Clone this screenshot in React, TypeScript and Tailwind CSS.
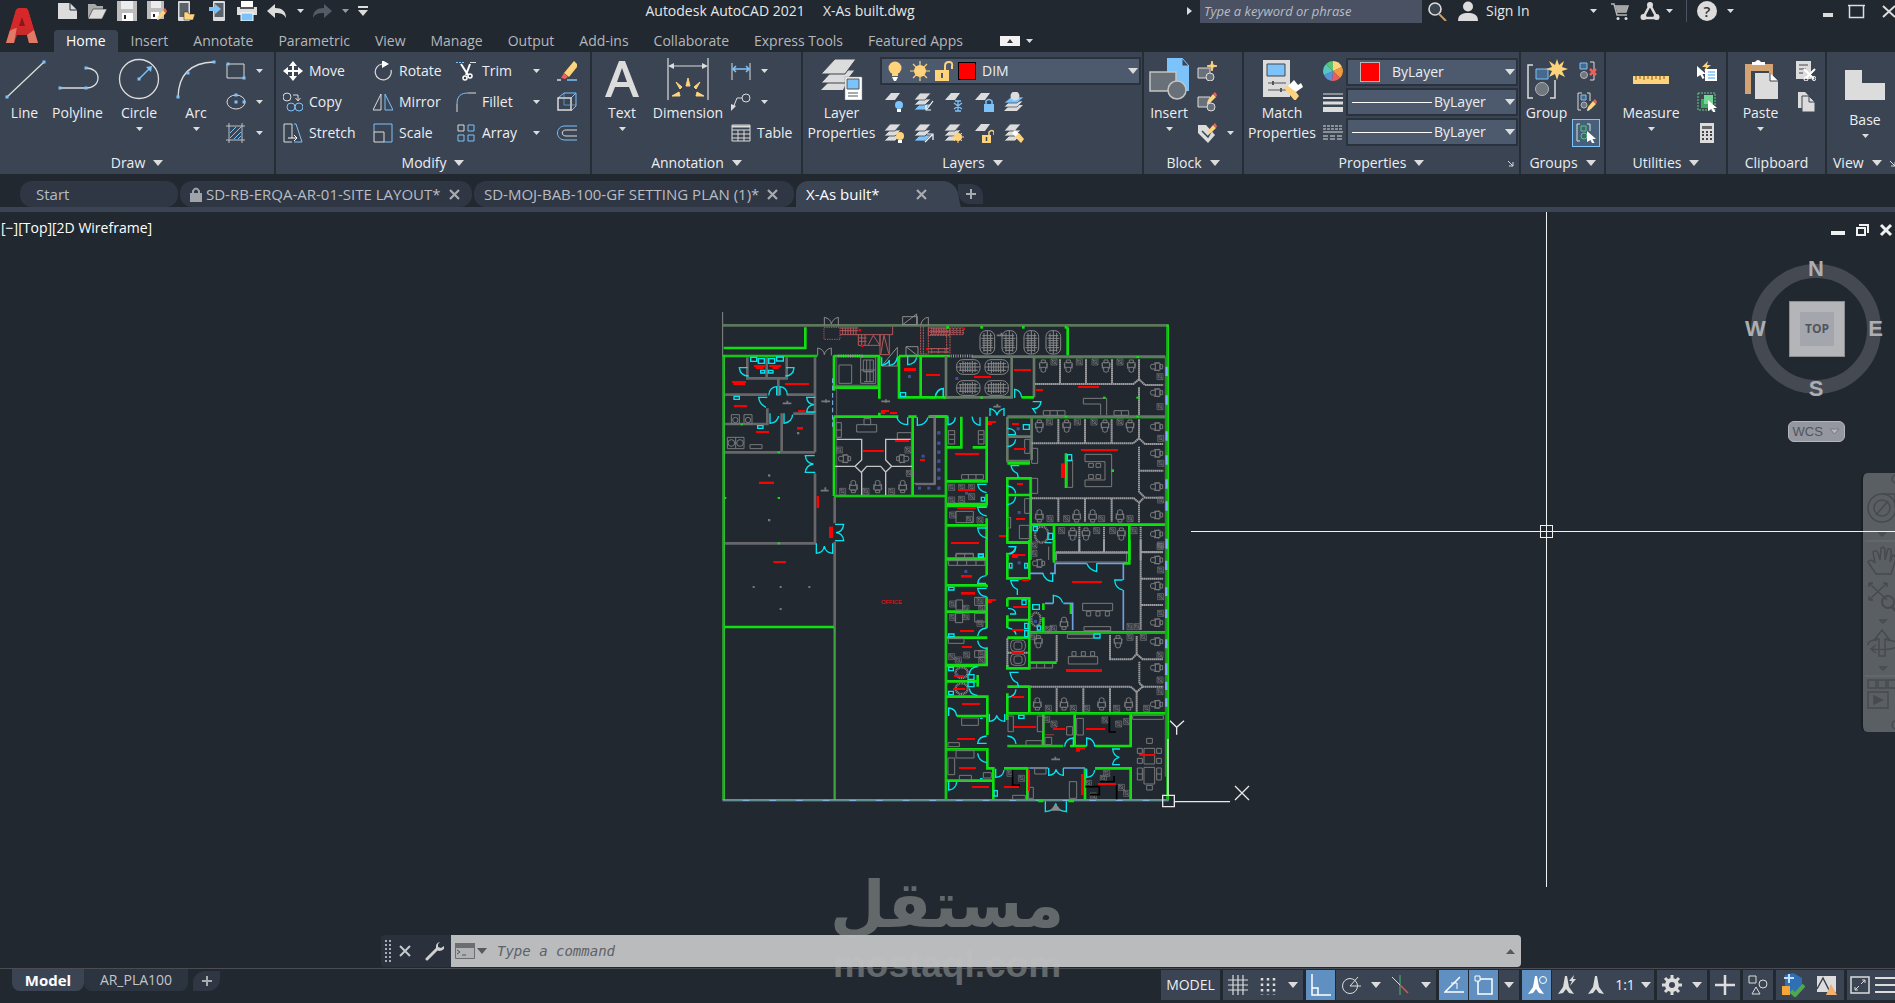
import React from "react";

const W = "#dcdcdc";
const B = "#7cc2fb";
const O = "#ffd27c";

type Kids = { children?: React.ReactNode };

function Ico({ s = 20, children }: Kids & { s?: number }) {
  return (
    <svg width={s} height={s} viewBox={`0 0 ${s} ${s}`} fill="none" className="shrink-0" aria-hidden="true">
      {children}
    </svg>
  );
}

function Caret({ big, color = W }: { big?: boolean; color?: string }) {
  return big ? (
    <svg width="10" height="6" viewBox="0 0 10 6" className="shrink-0" aria-hidden="true">
      <path d="M0 0H10L5 6Z" fill={color} />
    </svg>
  ) : (
    <svg width="7" height="4" viewBox="0 0 7 4" className="shrink-0" aria-hidden="true">
      <path d="M0 0H7L3.5 4Z" fill={color} />
    </svg>
  );
}

/* ---------- ribbon building blocks ---------- */

function Panel({ title, width, caret = true, launcher, children }: Kids & { title: string; width: string; caret?: boolean; launcher?: boolean }) {
  return (
    <section className={`flex shrink-0 flex-col border-r-2 border-[#262d37] pt-[3px] ${width}`}>
      <div className="flex h-[97px] items-start">{children}</div>
      <div className="flex h-[22px] items-center">
        <button className="flex flex-1 items-center justify-center gap-2 text-[14px] leading-5">
          {title}
          {caret && <Caret big />}
        </button>
        {launcher && (
          <button aria-label={`${title} settings`} className="-ml-3 w-3 shrink-0">
            <svg width="7" height="7" viewBox="0 0 7 7">
              <path d="M1 1L6 6M6 2V6H2" stroke={W} fill="none" />
            </svg>
          </button>
        )}
      </div>
    </section>
  );
}

function Big({ label, label2, width, caret, children }: Kids & { label: string; label2?: string; width: string; caret?: boolean }) {
  return (
    <button className={`flex shrink-0 flex-col items-center text-[14px] leading-5 ${width}`}>
      <span className="flex h-12 items-center justify-center">{children}</span>
      <span className="whitespace-nowrap">{label}</span>
      {label2 && <span className="whitespace-nowrap">{label2}</span>}
      {caret && (
        <span className="mt-1">
          <Caret />
        </span>
      )}
    </button>
  );
}

function Row({ label, text, caret, children }: Kids & { label: string; text?: boolean; caret?: boolean }) {
  return (
    <button aria-label={label} className="flex h-[31px] items-center gap-1.5 text-[14px] leading-5 whitespace-nowrap">
      {children}
      {text && <span>{label}</span>}
      {caret && (
        <span className="ml-auto pl-1">
          <Caret />
        </span>
      )}
    </button>
  );
}

function Field({ label, value, children, pad }: Kids & { label: string; value: string; pad: string }) {
  return (
    <div className="flex h-7 items-center border-2 border-[#2a323e] bg-[#4d5a6e]">
      {children}
      <select aria-label={label} className={`h-full min-w-0 flex-1 appearance-none bg-transparent text-[14px] leading-5 outline-none ${pad}`}>
        <option>{value}</option>
      </select>
      <Caret big />
      <span className="w-px" />
    </div>
  );
}

const dot = (x: number, y: number) => <rect key={`${x}-${y}`} x={x - 1.5} y={y - 1.5} width="3" height="3" fill={B} />;
const Sheet = ({ y = 0, c = W }: { y?: number; c?: string }) => <path d={`M1 ${y + 8}L7 ${y + 1}H16L11 ${y + 8}Z`} fill={c} />;
const Stack = ({ mid = W }: { mid?: string }) => (
  <g stroke="#3b4453" strokeWidth="0.8">
    <path d="M0 18L6 12H17L11 18Z" fill={mid} />
    <path d="M0 13L6 7H17L11 13Z" fill={W} />
    <path d="M0 8L6 1H17L11 8Z" fill={W} />
  </g>
);
const Pencil = () => (
  <g>
    <path d="M10 19L11 15L16 9L19 12L14 17Z" fill={O} />
    <path d="M16 9L18 7L20 10L19 12Z" fill="#f0605a" />
    <path d="M10 19L11 16L13 18Z" fill={W} />
  </g>
);
const Cursor = ({ x = 10, y = 7 }: { x?: number; y?: number }) => (
  <path transform={`translate(${x} ${y})`} d="M0 0L9 8H5.5L7.5 12L5.5 13L3.5 9L0 11Z" fill="#fff" />
);

/* ---------- title bar ---------- */

function QuickAccess() {
  return (
    <div className="flex items-center">
      <button aria-label="New" className="w-[30px]"><Ico><path d="M1 2H13L20 9V18H1Z" fill={W} /><path d="M13 2V9H20" stroke="#222830" /></Ico></button>
      <button aria-label="Open" className="w-[30px]"><Ico><path d="M1 18V3H8L10 5H16V8" fill="#a9a9a9" /><path d="M1 18L6 8H20L15 18Z" fill={W} stroke="#222830" strokeWidth=".6" /></Ico></button>
      <button aria-label="Save" className="w-[30px]"><Ico><path d="M0 0H20V20H0Z" fill="#bdbdbd" /><path d="M4 0H16V8H4Z" fill="#ececec" /><path d="M5 12H16V20H5Z" fill="#fff" /><path d="M7 14H9V18H7Z" fill="#222" /></Ico></button>
      <button aria-label="Save As" className="w-[30px]"><Ico><path d="M0 0H17V18H0Z" fill="#bdbdbd" /><path d="M4 0H14V7H4Z" fill="#ececec" /><path d="M4 11H12V18H4Z" fill="#fff" /><path d="M6 13H8V16H6Z" fill="#222" /><Pencil /></Ico></button>
      <button aria-label="Open from Web and Mobile" className="w-[30px]"><Ico><rect x="1" y="0" width="12" height="20" rx="1" fill={W} /><rect x="2.500" y="2" width="9" height="14" fill="#5c626b" /><path d="M7 19V11H11L12 13H18L16 19Z" fill={O} stroke="#222830" strokeWidth=".5" /></Ico></button>
      <button aria-label="Save to Web and Mobile" className="w-[30px]"><Ico><rect x="6" y="0" width="12" height="20" rx="1" fill={W} /><rect x="7.500" y="2" width="9" height="14" fill="#5c626b" /><path d="M2 6H8V3L14 8L8 13V10H2Z" fill={B} /></Ico></button>
      <button aria-label="Plot" className="w-[30px]"><Ico><path d="M4 0H16V6H4Z" fill="#fff" /><path d="M0 6H20V14H0Z" fill={W} /><path d="M3 6H17V8H3Z" fill="#555" /><path d="M4 12H16V20H4Z" fill={B} stroke="#fff" /></Ico></button>
      <button aria-label="Undo" className="w-[30px]"><Ico><path d="M0 10L8 3V7C15 7 19 10 19 17C17 13 14 12 8 12V17Z" fill={W} /></Ico></button>
      <button aria-label="Undo list" className="w-[15px]"><Caret /></button>
      <button aria-label="Redo" className="w-[30px]"><Ico><path d="M20 10L12 3V7C5 7 1 10 1 17C3 13 6 12 12 12V17Z" fill="#555b64" /></Ico></button>
      <button aria-label="Redo list" className="w-[15px]"><Caret color="#9a9a9a" /></button>
      <button aria-label="Customize" className="w-[20px]"><svg width="12" height="10" viewBox="0 0 12 10"><path d="M1 0H11V2H1ZM1 4H11L6 10Z" fill={W} /></svg></button>
    </div>
  );
}

function TitleBar() {
  return (
    <div className="flex h-6 items-center pb-0.5 text-[14px] leading-5 text-[#e6e6e6]">
      <div className="w-[3px]" />
      <QuickAccess />
      <h1 className="flex-1 pr-1 text-center whitespace-pre">Autodesk AutoCAD 2021{"     "}X-As built.dwg</h1>
      <div className="flex h-full items-center">
        <svg width="5" height="8" viewBox="0 0 5 8" className="mr-2"><path d="M0 0V8L5 4Z" fill={W} /></svg>
        <input aria-label="Search" placeholder="Type a keyword or phrase" className="h-6 w-[222px] bg-[#495163] px-1 text-[13px] italic outline-none placeholder:text-[#b9bdc4]" />
        <button aria-label="Find" className="w-[34px] pl-1.5"><Ico><circle cx="7" cy="8" r="6" stroke={W} strokeWidth="1.600" fill="#3c444f" /><path d="M11 13L18 20" stroke="#c79d6a" strokeWidth="2" /></Ico></button>
        <button className="flex w-[141px] items-center gap-2 pl-0.5"><Ico><circle cx="10" cy="5.500" r="5" fill={W} /><path d="M0 20C0 13 5 12 10 12S20 13 20 20Z" fill={W} /></Ico>Sign In<span className="ml-auto"><Caret /></span></button>
        <button aria-label="App Store" className="w-[43px] pl-3.5"><Ico><path d="M0 3H3L6 14H16M4 5H17L15 11H6" stroke="#b5b5b5" strokeWidth="1.500" /><path d="M4 5H17L15 11H6Z" fill="#a5a5a5" /><circle cx="7" cy="17.500" r="1.500" fill={W} /><circle cx="15" cy="17.500" r="1.500" fill={W} /></Ico></button>
        <button aria-label="Connect" className="flex w-[46px] items-center gap-1.5"><Ico><path d="M10 4L3 17H17Z" stroke={W} strokeWidth="2.500" /><circle cx="10" cy="4" r="3" fill={W} /><circle cx="3.500" cy="16" r="3" fill={W} /><circle cx="16.500" cy="16" r="3" fill={W} /></Ico><Caret /></button>
        <span className="h-full w-px bg-[#4a5363]" />
        <button aria-label="Help" className="flex w-[131px] items-center gap-2.5 pl-2.5">
          <span className="grid size-5 place-items-center rounded-full bg-[#dcdcdc] text-[15px] leading-5 font-semibold text-[#333]">?</span><Caret />
        </button>
        <button aria-label="Minimize" className="w-[30px]"><svg width="20" height="16" viewBox="0 0 20 16"><path d="M5 10H15V14H5Z" fill={W} /></svg></button>
        <button aria-label="Maximize" className="w-[30px]"><Ico s={17}><path d="M1.500 2V14.500H15.500V2M0 2.500H17" stroke={W} strokeWidth="1.500" /></Ico></button>
        <button aria-label="Close" className="w-[17px] overflow-hidden pl-1"><Ico s={14}><path d="M1 2L13 13M13 2L1 13" stroke={W} strokeWidth="2" /></Ico></button>
      </div>
    </div>
  );
}

const MENUS = ["Home", "Insert", "Annotate", "Parametric", "View", "Manage", "Output", "Add-ins", "Collaborate", "Express Tools", "Featured Apps"];

function Header() {
  return (
    <header className="flex h-[52px] shrink-0">
      <button aria-label="Application menu" className="w-[54px] shrink-0">
        <svg width="44" height="44" viewBox="0 0 44 44">
          <path d="M6 39L16 6Q17 4 19 4H25Q27 4 28 6L38 39H29L27 31H17L14 39Z" fill="#c92a2c" />
          <path d="M6 39L10 26L17 23L14 39ZM38 39L34 26L27 31L29 39Z" fill="#e07a66" />
          <path d="M10 27Q20 20 34 26L28 6Q27 4 25 4H19L16 6Z" fill="#d6282b" />
          <path d="M22 13L19 22H25Z" fill="#8a1618" />
        </svg>
      </button>
      <div className="flex min-w-0 flex-1 flex-col">
        <TitleBar />
        <nav className="mt-1.5 flex h-[22px] items-center gap-px text-[14px] leading-5 text-[#b4b7bc]">
          {MENUS.map((m, i) => (
            <button key={m} className={i === 0 ? "h-full rounded-t-sm bg-[#3b4453] px-3 text-white" : "px-3 whitespace-nowrap"}>{m}</button>
          ))}
          <button aria-label="Ribbon display" className="ml-6 flex items-center gap-1.5">
            <span className="grid h-2.5 w-5 place-items-center bg-[#f2f2f2]"><svg width="6" height="4" viewBox="0 0 6 4"><path d="M0 4H6L3 0Z" fill="#333" /></svg></span>
            <Caret />
          </button>
        </nav>
      </div>
    </header>
  );
}

/* ---------- ribbon ---------- */

function Ribbon() {
  return (
    <div className="flex h-[122px] shrink-0 overflow-hidden bg-[#3b4453] text-[#eceef0]">
      <Panel title="Draw" width="w-[276px]">
        <Big label="Line" width="w-[49px]"><Ico s={42}><path d="M3 39L40 4" stroke={W} strokeWidth="1.300" />{dot(3, 39)}{dot(40, 4)}</Ico></Big>
        <Big label="Polyline" width="w-[57px]"><Ico s={42}><path d="M3 30H29C36 30 41 26 41 20S36 10 29 10" stroke={W} strokeWidth="1.300" />{dot(3, 30)}{dot(29, 30)}{dot(29, 10)}</Ico></Big>
        <Big label="Circle" width="w-[66px]" caret><Ico s={42}><circle cx="21" cy="21" r="19.500" stroke={W} strokeWidth="1.300" /><path d="M21 21L32 10" stroke={B} strokeWidth="1.500" /><path d="M28 9L34 8L33 14Z" fill={B} />{dot(21, 21)}</Ico></Big>
        <Big label="Arc" width="w-[48px]" caret><Ico s={42}><path d="M3 39Q4 5 39 4" stroke={W} strokeWidth="1.300" />{dot(3, 39)}{dot(13, 15)}{dot(39, 4)}</Ico></Big>
        <div className="ml-1.5 flex w-9 flex-col">
          <Row label="Rectangle" caret><Ico><path d="M1 3H18V17H1Z" stroke={W} />{dot(2, 3)}{dot(18, 17)}</Ico></Row>
          <Row label="Ellipse" caret><Ico><ellipse cx="10" cy="10" rx="9" ry="7" stroke={W} />{dot(10, 10)}{dot(10, 3)}{dot(18, 10)}</Ico></Row>
          <Row label="Hatch" caret><Ico><path d="M0 3H19M0 17H19M3 0V20M16 0V20" stroke={W} strokeWidth=".8" /><path d="M4 10L10 4M4 15L15 4M8 16L15 9M12 16L15 13" stroke={B} /></Ico></Row>
        </div>
      </Panel>

      <Panel title="Modify" width="w-[316px]">
        <div className="flex w-[91px] flex-col pl-[7px]">
          <Row label="Move" text><Ico><path d="M10 2V18M2 10H18" stroke="#fff" strokeWidth="2" /><path d="M10 0L14 5H6ZM10 20L6 15H14ZM0 10L5 6V14ZM20 10L15 14V6Z" fill="#fff" /></Ico></Row>
          <Row label="Copy" text><Ico><circle cx="4" cy="5" r="4" stroke={W} /><path d="M10 3H15V8M12.500 6L15 9L17.500 6" stroke={W} /><circle cx="8" cy="15" r="4" stroke={B} /><circle cx="16" cy="15" r="4" stroke={B} /></Ico></Row>
          <Row label="Stretch" text><Ico><path d="M9 15V1H1V19H9" stroke={W} /><path d="M11 1H13L19 19H11" stroke={B} /><path d="M5 15H13M11 12L14 15L11 18" stroke="#fff" /></Ico></Row>
        </div>
        <div className="flex w-[88px] flex-col pl-[6px]">
          <Row label="Rotate" text><Ico><path d="M9 3A8 8 0 1 0 18 9" stroke={W} strokeWidth="1.200" /><path d="M9 -1L16 3L9 7Z" fill="#fff" /></Ico></Row>
          <Row label="Mirror" text><Ico><path d="M8 2V18H0Z" stroke={W} /><path d="M12 2V18H20Z" stroke={B} /></Ico></Row>
          <Row label="Scale" text><Ico><path d="M1 9V1H19V19H11" stroke={B} /><path d="M1 9H11V19H1Z" stroke={W} /></Ico></Row>
        </div>
        <div className="ml-px flex w-[84px] flex-col">
          <Row label="Trim" text caret><Ico><path d="M0 1.500H8" stroke={B} strokeDasharray="2 1" /><path d="M14 1.500H20" stroke={W} /><path d="M5 3L12 14M14 3L10 14" stroke="#fff" strokeWidth="2" /><circle cx="9" cy="17" r="2" stroke="#fff" strokeWidth="1.500" /><circle cx="14" cy="15" r="2" stroke="#fff" strokeWidth="1.500" /></Ico></Row>
          <Row label="Fillet" text caret><Ico><path d="M1 20V12" stroke={W} /><path d="M1 12C1 4 5 1 12 1" stroke={B} /><path d="M12 1H20" stroke={W} /></Ico></Row>
          <Row label="Array" text caret><Ico><path d="M2 2H8V8H2Z" stroke={W} /><path d="M12 2H18V8H12ZM2 12H8V18H2ZM12 12H18V18H12Z" stroke={B} /></Ico></Row>
        </div>
        <div className="ml-[17px] flex flex-col">
          <Row label="Erase"><Ico><path d="M0 19H4" stroke={W} strokeWidth="1.500" /><path d="M10 19H20" stroke={B} strokeWidth="1.500" /><path d="M7 12L17 0L20 3V6L12 16Z" fill={O} /><path d="M4 17L7 12L11 16L8 18Z" fill="#f0605a" /></Ico></Row>
          <Row label="Explode"><Ico><path d="M1 6L7 1H19V14L14 19M14 6L19 1" stroke={B} /><path d="M1 6H14V18H1Z" stroke={W} strokeWidth="1.500" /><path d="M7 1V13H19" stroke={B} strokeWidth=".6" /></Ico></Row>
          <Row label="Offset"><Ico><path d="M20 3H8C-2 3-2 17 8 17H20" stroke={B} /><path d="M20 7H9C4 7 4 13 9 13H20" stroke={W} /></Ico></Row>
        </div>
      </Panel>

      <Panel title="Annotation" width="w-[211px]">
        <Big label="Text" width="w-[60px]" caret><Ico s={40}><path d="M3 38L17 2H23L37 38H31L27 28H13L9 38ZM15 23H25L20 9Z" fill={W} fillRule="evenodd" /></Ico></Big>
        <Big label="Dimension" width="w-[72px]"><Ico s={42}><path d="M1 0V42M41 0V42M3 8H39" stroke={W} strokeWidth="1.200" /><path d="M1 8L7 5V11ZM41 8L35 5V11Z" fill={W} /><path d="M21 20L23 28H19ZM9 24L15 29L13 31ZM33 24L27 29L29 31ZM5 38L12 34L13 38ZM37 38L30 34L29 38Z" fill={O} stroke={O} /></Ico></Big>
        <div className="ml-[7px] flex flex-col">
          <div className="flex w-9 flex-col">
            <Row label="Linear" caret><Ico><path d="M1 2V19M19 2V19" stroke={W} /><path d="M2 8H18M5 5L2 8L5 11M15 5L18 8L15 11" stroke={B} strokeWidth="1.500" /></Ico></Row>
            <Row label="Leader" caret><Ico><circle cx="15" cy="6" r="4" stroke={W} /><path d="M11 6H6L2 16" stroke={W} /><path d="M0 19V12L5 14Z" fill={W} /></Ico></Row>
          </div>
          <Row label="Table" text><Ico><path d="M1 2H19V18H1ZM1 7H19M1 11H19M1 15H19M7 7V18M13 7V18" stroke={W} /><path d="M1 3.500H19" stroke={W} strokeWidth="2" /></Ico></Row>
        </div>
      </Panel>

      <Panel title="Layers" width="w-[341px]">
        <Big label="Layer" label2="Properties" width="w-[77px]"><Ico s={42}><path d="M0 32L12 20H28L22 32Z" fill={W} /><path d="M0 25L12 12H34L24 25Z" fill={W} stroke="#3b4453" /><path d="M0 16L14 1H35L24 16Z" fill={W} stroke="#3b4453" /><path d="M24 19H41V42H24Z" fill="#fff" stroke="#8a8f97" strokeWidth=".5" /><path d="M26 21H38V31H26Z" fill={B} stroke="#555" /><path d="M27 35H37M27 38H37" stroke="#555" /></Ico></Big>
        <div className="flex min-w-0 flex-1 flex-col pr-px">
          <div className="h-[31px] pt-0.5">
            <Field label="Layer" value="DIM" pad="pl-1.5">
              <div className="flex items-center gap-1 pl-1">
                <Ico><circle cx="9" cy="7" r="6.500" fill={O} /><path d="M6 13H12V15H6Z" fill={O} /><path d="M6 16H12L10 20H8Z" fill="#fff" /></Ico>
                <Ico><circle cx="10" cy="10" r="6" fill={O} /><path d="M10 0V20M0 10H20M3 3L17 17M17 3L3 17" stroke={O} strokeWidth="1.200" /></Ico>
                <Ico><path d="M1 9H15V20H1Z" fill={O} /><path d="M11 9V5Q11 1 15 1T18 5V8" stroke={O} strokeWidth="2" /><path d="M8 12V17" stroke="#4d5a6e" strokeWidth="2" /></Ico>
                <span className="size-[18px] border border-black bg-[#ff0000]" />
              </div>
            </Field>
          </div>
          <div className="flex h-[31px] items-center gap-2.5 pl-1">
            <button aria-label="Layer off"><Ico><Sheet /><circle cx="15" cy="13" r="4" fill={B} /><path d="M13 17H17V20H13Z" fill="#fff" /></Ico></button>
            <button aria-label="Layer isolate"><Ico><Stack mid={B} /><path d="M19 9L13 17M12 13V18H17" stroke="#fff" strokeWidth="1.200" /></Ico></button>
            <button aria-label="Layer freeze"><Ico><Sheet /><path d="M14 9V19M10 11L18 17M18 11L10 17M11 9L17 9M11 19H17" stroke={B} strokeWidth="1.300" /></Ico></button>
            <button aria-label="Layer lock"><Ico><Sheet /><path d="M10 12H20V20H10Z" fill={B} /><path d="M12 12V9Q15 6 18 9V12" stroke={B} strokeWidth="1.500" /></Ico></button>
            <button aria-label="Make current"><Ico><path d="M0 19L6 13H19L13 19Z" fill={W} /><path d="M0 15L6 9H19L13 15Z" fill={W} stroke="#3b4453" strokeWidth=".7" /><path d="M0 11L7 5H20L13 11Z" fill={B} stroke="#3b4453" strokeWidth=".7" /><circle cx="11" cy="4" r="4.500" fill={W} /></Ico></button>
          </div>
          <div className="flex h-[31px] items-center gap-2.5 pl-1">
            <button aria-label="Turn all layers on"><Ico><Stack /><circle cx="16" cy="13" r="4" fill={O} /><path d="M14 17H18V20H14Z" fill="#fff" /></Ico></button>
            <button aria-label="Unisolate"><Ico><Stack mid={B} /><path d="M11 19L18 12M13 11H19V17" stroke="#fff" strokeWidth="1.200" /></Ico></button>
            <button aria-label="Thaw all layers"><Ico><Stack /><circle cx="14" cy="14" r="4" fill={O} /><path d="M14 8V20M8 14H20M10 10L18 18M18 10L10 18" stroke={O} /></Ico></button>
            <button aria-label="Unlock layer"><Ico><Sheet /><path d="M8 12H17V20H8Z" fill={O} /><path d="M15 12V9Q18 6 20 9V12" stroke={O} strokeWidth="1.500" /><path d="M12.500 14V18" stroke="#3b4453" strokeWidth="1.500" /></Ico></button>
            <button aria-label="Match layer"><Ico><Stack /><path d="M8 10L11 7L15 11L12 14Z" fill="#fff" /><path d="M11 14L15 10L20 16L17 20Z" fill={O} /></Ico></button>
          </div>
        </div>
      </Panel>

      <Panel title="Block" width="w-[100px]">
        <Big label="Insert" width="w-[50px]" caret><Ico s={42}><path d="M19 0H34L41 8V33H19Z" fill={B} /><path d="M34 0V8H41Z" fill="#3b4453" stroke={B} /><path d="M2 14H28V33H2Z" fill="#6a7078" stroke="#c4c4c4" strokeWidth="1.500" /><circle cx="29" cy="32" r="9" fill="#6a7078" stroke="#c4c4c4" strokeWidth="1.500" /></Ico></Big>
        <div className="ml-[3px] flex w-9 flex-col">
          <Row label="Create block"><Ico><path d="M1 7H13V17H1Z" fill="#6a7078" stroke={W} /><circle cx="13" cy="16" r="4" fill="#6a7078" stroke={W} /><path d="M15 0L16 4L20 5L16 6L15 10L14 6L10 5L14 4Z" fill={O} stroke={O} /></Ico></Row>
          <Row label="Edit block"><Ico><path d="M1 5H13V15H1Z" fill="#6a7078" stroke={W} /><circle cx="14" cy="15" r="4" fill="#6a7078" stroke={W} /><g transform="translate(0 -7)"><Pencil /></g></Ico></Row>
          <Row label="Edit attributes" caret><Ico><path d="M1 2H9L18 12L11 20L1 10Z" fill={W} /><path d="M5 8L11 14L15 7" stroke="#3b4453" strokeWidth="1.500" /><g transform="translate(0 -7)"><Pencil /></g></Ico></Row>
        </div>
      </Panel>

      <Panel title="Properties" width="w-[277px]" launcher>
        <Big label="Match" label2="Properties" width="w-[76px]"><Ico s={42}><path d="M2 2H29V39H2Z" fill={W} /><path d="M6 6H24V18H6Z" fill={B} stroke="#444" /><path d="M7 25H25M7 32H25" stroke="#555" /><path d="M12 23V27M20 30V34" stroke="#555" strokeWidth="2" /><path d="M23 30L29 26L38 38L34 43Z" fill={O} /><path d="M27 28L33 22L37 27L40 25L42 29L35 34Z" fill="#fff" /></Ico></Big>
        <div className="ml-[3px] flex flex-col">
          <Row label="Object color"><Ico><path d="M10 10V0A10 10 0 0 1 19 6Z" fill="#ffd27c" /><path d="M10 10L19 6A10 10 0 0 1 17 17Z" fill="#f49a3d" /><path d="M10 10L17 17A10 10 0 0 1 9 20Z" fill="#f05a5a" /><path d="M10 10L9 20A10 10 0 0 1 1 14Z" fill="#5b8fd6" /><path d="M10 10L1 14A10 10 0 0 1 3 3Z" fill="#54c8c0" /><path d="M10 10L3 3A10 10 0 0 1 10 0Z" fill="#58c470" /></Ico></Row>
          <Row label="Lineweight"><Ico><path d="M0 2H20" stroke={W} strokeWidth="1" /><path d="M0 6H20" stroke={W} strokeWidth="2" /><path d="M0 11H20" stroke={W} strokeWidth="3" /><path d="M0 17.500H20" stroke={W} strokeWidth="5" /></Ico></Row>
          <Row label="Linetype"><Ico><path d="M0 3H20M0 6H20" stroke={W} strokeDasharray="3 1" /><path d="M0 9H20" stroke={W} /><path d="M0 13H20M0 16H20" stroke={W} strokeDasharray="5 2" /></Ico></Row>
        </div>
        <div className="ml-[3px] flex flex-1 flex-col gap-0.5 pt-[3px] pr-px">
          <Field label="Object color" value="ByLayer" pad="pl-3"><span className="ml-3 size-5 border border-[#b9b9b9] bg-[#ff0000]" /></Field>
          <Field label="Lineweight" value="ByLayer" pad="pl-0.5"><span className="ml-1 h-px w-20 bg-white" /></Field>
          <Field label="Linetype" value="ByLayer" pad="pl-0.5"><span className="ml-1 h-px w-20 bg-white" /></Field>
        </div>
      </Panel>

      <Panel title="Groups" width="w-[85px]">
        <Big label="Group" width="w-[51px]"><Ico s={42}><path d="M7 7H2V40H7M24 40H29V22" stroke={W} strokeWidth="1.500" /><path d="M10 11H22V21H10Z" fill="#46698c" stroke={B} /><circle cx="16" cy="31" r="6.500" fill="#70767e" stroke="#b5b5b5" /><path d="M31 1L33 7L38 3L36 9L42 11L36 13L39 19L33 16L31 22L29 16L23 19L26 13L20 11L26 9L23 3L29 7Z" fill={O} /></Ico></Big>
        <div className="flex flex-col items-center">
          <div className="pl-0.5"><Row label="Ungroup"><Ico><path d="M3 2H10V8H3Z" fill="#46698c" stroke={B} /><circle cx="7" cy="14" r="3.500" fill="#70767e" stroke="#b5b5b5" /><path d="M13 1H17V19H13" stroke={W} /><path d="M13 8L19 14M19 8L13 14" stroke="#f0605a" strokeWidth="2.500" /></Ico></Row></div>
          <div className="pl-0.5"><Row label="Edit group"><Ico><path d="M5 1H1V18H4M10 1H13V9" stroke={W} /><path d="M4 3H9V8H4Z" fill="#46698c" stroke={B} /><circle cx="7" cy="13" r="3" fill="#70767e" stroke="#b5b5b5" /><Pencil /></Ico></Row></div>
          <button aria-label="Group selection" className="mt-0.5 grid size-7 place-items-center border border-[#7cc2fb] bg-[#46607c]"><Ico><path d="M4 1H1V18H4M11 1H14V8" stroke={W} /><path d="M5 3H10V8H5Z" stroke="#4fd06a" /><circle cx="8" cy="13" r="3" stroke="#4fd06a" /><Cursor x={11} y={8} /></Ico></button>
        </div>
      </Panel>

      <Panel title="Utilities" width="w-[122px]">
        <Big label="Measure" width="w-[90px]" caret><Ico s={36}><path d="M0 15H36V23H0Z" fill={O} /><path d="M3 15V19M7 15V18M11 15V19M15 15V18M19 15V19M23 15V18M27 15V19M31 15V18" stroke="#7a5a20" /></Ico></Big>
        <div className="ml-px flex flex-col">
          <Row label="Quick select"><Ico><path d="M11 0L5 6H9L7 10L14 4H10Z" fill={O} /><path d="M8 8H20V20H8Z" fill="#fff" /><path d="M11 11H18M11 14H18M11 17H18" stroke={B} strokeWidth="1.500" /><Cursor x={0} y={5} /></Ico></Row>
          <Row label="Select all"><Ico><path d="M1 1H18V18H1Z" stroke="#5fd080" strokeDasharray="2 1" /><path d="M4 7H13V16H4Z" fill="#3fa860" /><path d="M7 3H16V12H7Z" fill="#74d795" /><Cursor x={11} y={8} /></Ico></Row>
          <Row label="Quick calculator"><Ico><path d="M3 0H17V20H3Z" fill={W} /><path d="M5 3H15V6H5Z" fill="#666" /><path d="M5 9H7M9 9H11M13 9H15M5 12H7M9 12H11M13 12H15M5 16H7M9 16H11M13 16H15" stroke="#444" strokeWidth="2" /></Ico></Row>
        </div>
      </Panel>

      <Panel title="Clipboard" width="w-[99px]" caret={false}>
        <Big label="Paste" width="w-[65px]" caret><Ico s={40}><path d="M4 5H32V35H4Z" fill="#d4a373" /><path d="M8 10H28V35H8Z" fill="#3b4453" /><path d="M4 5H32V12H10V35H4Z" fill="#d4a373" /><path d="M11 6V3H14Q17-1 20 3H24V6Z" fill="#fff" /><path d="M14 14H29L37 22V40H14Z" fill={W} /><path d="M29 14V22H37" fill="#fff" stroke="#3b4453" /></Ico></Big>
        <div className="ml-[3px] flex flex-col">
          <Row label="Cut"><Ico><path d="M0 0H15V18H0Z" fill={W} /><path d="M3 4H12M3 8H10M3 12H7" stroke="#444" /><path d="M8 8L18 18M19 8L10 17" stroke="#fff" strokeWidth="2" /><circle cx="18" cy="17.500" r="2" stroke="#fff" /><circle cx="10" cy="18" r="2" stroke="#fff" /></Ico></Row>
          <Row label="Copy to clipboard"><Ico><path d="M2 0H9L14 5V16H2Z" fill={W} /><path d="M6 4H13L19 10V20H6Z" fill={W} stroke="#3b4453" /><path d="M13 4V10H19" stroke="#3b4453" /></Ico></Row>
        </div>
      </Panel>

      <section className="flex min-w-0 flex-1 flex-col overflow-hidden pt-2.5">
        <div className="flex h-[90px] items-start justify-center pl-2"><Big label="Base" width="w-[50px]" caret><Ico s={40}><path d="M0 4H17V17H40V34H0Z" fill={W} /></Ico></Big></div>
        <div className="flex h-[22px] items-center justify-between pl-1.5 text-[14px] leading-5">
          <button className="flex items-center gap-2">View<Caret big /></button>
          <button aria-label="View settings" className="w-1.5 overflow-hidden"><svg width="7" height="7" viewBox="0 0 7 7"><path d="M1 1L6 6M6 2V6H2" stroke={W} fill="none" /></svg></button>
        </div>
      </section>
    </div>
  );
}

/* ---------- document tabs ---------- */

function DocTabs() {
  const base = "relative flex h-[26px] shrink-0 items-center rounded-xl bg-[#303744] whitespace-nowrap";
  return (
    <div className="flex h-[38px] shrink-0 items-start border-b-5 border-[#3b4453] bg-[#222830] pt-[7px] pl-5 text-[15px] leading-5 text-[#b9bcc2]">
      <button className={`${base} mr-0.5 w-[158px] pl-4`}>Start</button>
      <div className={`${base} mr-0.5 w-[292px] pl-2.5`}>
        <svg width="12" height="15" viewBox="0 0 12 15" className="mr-1"><path d="M0 6H12V15H0Z" fill="#a0a4aa" /><path d="M3 7V4Q6-1 9 4V7" stroke="#a0a4aa" strokeWidth="2" fill="none" /></svg>
        <button>SD-RB-ERQA-AR-01-SITE LAYOUT*</button>
        <CloseX />
      </div>
      <div className={`${base} mr-0.5 w-[320px] pl-2.5`}>
        <button>SD-MOJ-BAB-100-GF SETTING PLAN (1)*</button>
        <CloseX />
      </div>
      <div className="flex h-[26px] w-[150px] shrink-0 items-center rounded-t-xl bg-[#3b4453] pl-2.5 text-white after:-mr-3 after:ml-auto after:h-full after:w-6 after:skew-x-12 after:rounded-tr-xl after:bg-[#3b4453]">
        <button className="relative z-10 whitespace-nowrap">X-As built*</button>
        <span className="relative z-10 pl-7"><CloseX /></span>
      </div>
      <button aria-label="New drawing" className="mt-[3px] ml-3 grid h-5 w-[25px] place-items-center rounded-tr-xl rounded-bl-xl bg-[#303744]">
        <svg width="10" height="10" viewBox="0 0 10 10"><path d="M5 0V10M0 5H10" stroke="#a8abb0" strokeWidth="2" /></svg>
      </button>
    </div>
  );
}

function CloseX() {
  return (
    <button aria-label="Close drawing" className="ml-2">
      <svg width="11" height="11" viewBox="0 0 11 11"><path d="M1 1L10 10M10 1L1 10" stroke="#a8abb0" strokeWidth="2.200" /></svg>
    </button>
  );
}

/* ---------- floor plan ---------- */

const FURN = "#7a7a7b";
const GREEN = "#0fe00f";

function Chair({ x, y, r = 0 }: { x: number; y: number; r?: number }) {
  return (
    <g transform={`translate(${x} ${y}) rotate(${r})`}>
      <path d="M-11-10H11V4H-11ZM-7 4V16Q0 22 7 16V4M-14-6H-11V8M14-6H11V8M-6-18H6V-10H-6Z" />
    </g>
  );
}

function Desk({ x, y }: { x: number; y: number }) {
  return <path d={`M${x - 9} ${y - 9}h18v18h-18ZM${x - 5} ${y - 5}h9v9h-9ZM${x - 9} ${y - 9}l18 18`} strokeWidth="2" />;
}

function Car({ x, y, r = 0 }: { x: number; y: number; r?: number }) {
  return (
    <g transform={`translate(${x} ${y}) rotate(${r})`} stroke="#8a8a8a">
      <rect x="-22" y="-35" width="44" height="70" rx="18" />
      <path d="M-15-20H15M-18-12H18M-15-5H15M-15 2H15M-15 9H15M-18 16H18M-12 24H12M-10-28V28M0-34V34M10-28V28" />
    </g>
  );
}

type R = [number, number, number, number];
const bars = (list: R[], fill: string) => list.map(([x, y, w, h], i) => <rect key={i} x={x} y={y} width={w} height={h} fill={fill} />);
const chairs = (list: number[][]) => list.map(([x, y, r]) => <Chair key={`${x},${y}`} x={x} y={y} r={r} />);
const desks = (list: number[][]) => list.map(([x, y]) => <Desk key={`${x},${y}`} x={x} y={y} />);

function WestWing() {
  return (
    <g transform="scale(0.33333)" fill="none">
      <path d="M38 36V168" stroke="#8a8a8a" strokeWidth="3" />
      <path d="M38 76H1376" stroke="#5c775c" strokeWidth="8" />
      <g stroke="#67676b" strokeWidth="8">
        <path d="M41 284H172M200 284H205V235M112 172V235H230V172M170 172V235M230 284H315M315 172V457M41 372H172V325M215 340V457M250 341H315M41 457H315M315 520V730H41M374 590V670M374 725V980M505 172V258H376" />
      </g>
      <path d="M374 980V1500" stroke="#3fa03f" strokeWidth="7" />
      <path d="M41 168V1500" stroke="#2fc42f" strokeWidth="8" />
      <g stroke={GREEN} strokeWidth="8">
        <path d="M38 168H322M41 144H286V82M372 166V272M372 168H510M508 168V296M372 263H510M372 350V588M372 350H565M508 338V350M595 350H620M655 350H715M608 350V585M372 588H710M567 168V292H675M567 168H720M632 168V292M700 292H720M41 981H372" />
      </g>
      <path d="M41 170V1500M45 168H322M372 588H708" stroke="#2a7a2a" strokeWidth="1.500" />
      <path d="M368 235V380" stroke={B} strokeWidth="3" strokeDasharray="14 8" />
      <g stroke={FURN} strokeWidth="3">
        <path d="M387 195H425V250H387ZM452 172H497V250H452ZM460 180H490V215H460ZM462 215H490V245H462M470 180V245M480 180V245M452 210H497" />
        <path d="M440 374H500V396H440ZM462 356H482V374H462ZM562 398H604V418H562ZM378 368H394V412H378ZM378 390H394" />
        <path d="M64 344H88V372H64ZM102 344H126V372H102ZM52 412H102V446H52ZM77 412V446M120 434H156V446H120Z" />
        <circle cx="76" cy="360" r="8" /><circle cx="114" cy="360" r="8" /><circle cx="64" cy="429" r="10" /><circle cx="90" cy="429" r="10" />
        <path d="M612 550H672V354M616 554H676V354" />
        <path d="M343 76V52Q362 56 364 72Q368 56 385 52V76M323 166V144Q342 148 343 164Q346 148 364 144V166M632 76Q636 54 655 52V76M578 50H622V74H578ZM578 74L620 42V74M515 198H562V142L515 198M588 140H624V168H588ZL624 168" stroke="#8c8c8c" />
        <path d="M218 310H244M232 302V312M334 304H360M348 298V308M514 304H540M528 298V308M332 572H356M346 562V572" strokeWidth="5" />
        {chairs([[404, 476, 90], [578, 476, -90], [430, 560, 180], [503, 560, 180], [578, 560, 180]])}
        {desks([[388, 450], [594, 450], [398, 574], [468, 574], [545, 574], [598, 520]])}
        <path d="M380 168V585M604 420V585" strokeWidth="2" />
      </g>
      <path d="M380 418H455V480L435 499H375M435 499L455 518V585M602 418H527V480L545 499H606M545 499L527 516V585M455 516L470 499H512L527 516" stroke="#c4c4c4" strokeWidth="4" />
      <g stroke="#b4595c" strokeWidth="3">
        <path d="M342 82H390V118H342Z" strokeDasharray="4 3" />
        <path d="M390 84H445M390 92H445M390 104H510M398 82V104M406 82V104M414 82V104M422 82V104M430 82V104M438 82V104M548 80V104H510M445 104V136H510V104M445 114H470M445 124H470M455 104V136M465 104V136M475 134L490 106L508 134M510 104V164H538V104M512 164L522 106L536 160" />
        <path d="M632 80V162H655M640 80V162M655 84H720V106H655ZM655 94H720M655 146H720M655 156H720M665 84V106M675 84V106M685 84V106M695 84V106M705 84V106M665 146V162M685 146V162M705 146V162M655 80V162" strokeDasharray="6 2" />
      </g>
      <path d="M385 168H460" stroke="#9a9a9a" strokeWidth="9" strokeDasharray="3 4" />
      <g stroke="#00e5ee" strokeWidth="4">
        <path d="M113 203H88Q90 228 116 228M228 203H252Q250 228 226 228M200 286V260Q178 262 176 286M210 286V260Q230 262 232 284M172 292H146Q148 312 168 322M180 340V370Q202 368 206 348M222 340V370Q246 366 248 344M316 292H290Q292 312 312 314Q292 316 290 336H316M314 467H286Q288 490 310 492Q288 496 286 517H316M375 673H401Q399 695 378 698Q399 700 401 722H375M319 730V760Q340 758 343 738Q346 758 368 760V730M515 172V196Q534 192 538 180V196Q558 194 562 172M593 168V194Q616 192 620 172M700 292V265Q680 267 676 290M560 350Q566 374 593 374V352M622 352V376Q648 374 654 352" />
        <path d="M122 172h18v12h-18ZM145 176h18v14h-18ZM176 176h18v14h-18ZM200 171h20v12h-20ZM152 211h12v8h-12ZM175 211h14v8h-14ZM72 289h16v9h-16ZM143 377h16v8h-16ZM571 278h16v11h-16Z" />
      </g>
      {bars([[66, 243, 42, 6], [70, 249, 35, 6], [132, 195, 36, 6], [138, 201, 22, 6], [178, 195, 35, 6], [188, 201, 18, 6], [225, 249, 72, 6], [72, 315, 39, 6], [264, 330, 22, 6], [138, 393, 39, 6], [261, 381, 18, 8], [147, 545, 45, 7], [320, 588, 7, 36], [357, 680, 12, 34], [582, 204, 36, 9], [648, 222, 42, 6], [513, 330, 24, 6], [513, 336, 12, 6], [540, 336, 21, 6], [459, 450, 63, 6], [555, 420, 42, 6], [630, 477, 15, 6], [446, 87, 7, 7], [453, 134, 7, 7], [648, 144, 7, 7], [190, 783, 38, 6]], "#ff0000")}
      {bars([[594, 225, 9, 9], [682, 394, 9, 9], [682, 425, 9, 9], [682, 452, 9, 9], [682, 479, 9, 9], [682, 505, 9, 9], [682, 530, 9, 9], [682, 560, 9, 9], [652, 560, 9, 9], [624, 560, 9, 9], [635, 464, 9, 9]], "#3f4f9a")}
      {bars([[203, 591, 7, 6], [203, 454, 7, 6], [92, 370, 7, 6], [43, 591, 6, 6], [203, 727, 7, 6]], GREEN)}
      {bars([[174, 523, 7, 7], [174, 657, 7, 7], [261, 396, 7, 7], [128, 858, 6, 6], [209, 858, 6, 6], [295, 858, 6, 6], [209, 924, 6, 6]], "#77777c")}
      <text x="513" y="911" fontSize="17" fill="#ff1010" fontFamily="Liberation Sans">OFFICE</text>
      <path d="M38 1501H1376" stroke="#7fb0e6" strokeWidth="6" />
      <path d="M38 1501H1376" stroke="#4a6f4a" strokeWidth="2" strokeDasharray="60 20" />
    </g>
  );
}

function NorthEast() {
  return (
    <g transform="translate(220 0) scale(0.33333)" fill="none">
      <g stroke="#67786a" strokeWidth="8">
        <path d="M48 168V292M48 292H245V170M312 170V292M125 170H706M232 350H706M232 350V487M232 410H305M232 483H300M305 350V480" />
      </g>
      <path d="M312 174H705M235 355H705" stroke="#1f9a1f" strokeWidth="2" />
      <g stroke={GREEN} strokeWidth="8">
        <path d="M413 82V166M713 74V1500M0 292H48M275 292H312M0 350H50M48 350V1500M94 350V442H50M128 442H170M170 350V548M50 544H172M50 612H172M170 582V616M50 618H172M50 676H172M170 655V780M50 776H172M232 490H300M232 535V727H302V535ZM232 585H300M232 768V780M298 727V780M408 460V564M302 674H706M372 674V780M598 674V780" />
      </g>
      <path d="M48 355V1500M713 80V1500" stroke="#2a7a2a" strokeWidth="1.500" />
      <path d="M706 170V1430" stroke="#6a6a6e" strokeWidth="3" />
      <path d="M710 200V228M710 286V314M710 394V422M710 466V494M710 538V566M710 604V632M710 716V746" stroke="#7fb0ff" strokeWidth="7" />
      <g stroke="#9c9c9f" strokeWidth="6" strokeDasharray="5 1">
        <path d="M315 252H610L627 238L645 255H700M627 178V240M627 262V345M390 178V250M468 178V250M546 178V250M305 430H610L627 415L645 432H700M627 358V415M385 358V430M465 358V430M545 358V430M627 440V575L645 593H700M627 512H700M305 595H612L627 608L640 595M385 595V665M465 595V665M545 595V665M627 608V668M448 680V755M522 680V755M378 757H595M632 680V780M640 757H700M378 757V780" />
      </g>
      <g stroke={FURN} strokeWidth="3">
        {chairs([[340, 198, 0], [415, 198, 0], [528, 198, 0], [604, 198, 0], [328, 378, 0], [410, 378, 0], [525, 378, 0], [600, 378, 0], [680, 200, 90], [680, 278, 90], [680, 380, 90], [680, 460, 90], [680, 560, 90], [680, 645, 90], [328, 648, 180], [440, 648, 180], [488, 648, 180], [570, 648, 180], [428, 702, 0], [468, 702, 0], [574, 702, 0], [680, 702, 90]])}
        {desks([[372, 186], [448, 186], [495, 186], [570, 186], [690, 230], [690, 320], [358, 366], [442, 366], [492, 366], [570, 366], [692, 415], [692, 490], [692, 600], [360, 656], [410, 656], [515, 656], [600, 656], [395, 692], [500, 692], [548, 692], [612, 692], [690, 740], [65, 562], [95, 562], [125, 562], [65, 600], [95, 598], [125, 590], [68, 645], [118, 658], [150, 660]])}
        <path d="M460 295H530V345M460 295V312H512V345M465 463H545V560H465V540H525V485H465ZM476 490H490V502H476ZM498 490H512V502H498ZM476 524H490V536H476ZM498 524H512V536H498ZM412 480H428V562H412ZM305 445H323V490H305ZM305 535H323V580H305ZM340 332H405V346H340ZM360 332V346M382 332V346M552 332H596V346H552ZM574 332V346M95 524H160V538H95ZM115 524V538M138 524V538M78 634H130V668H78ZM268 676H298V716H268ZM78 760H130V774H78ZM284 418H300V460H284ZM284 596H300V640H284ZM304 700V780M356 740V780" />
        <path d="M55 392H74V432H55ZM145 392H162V432H145ZM58 404H72M58 418H72M148 404H160M148 418H160" />
        <ellipse cx="335" cy="704" rx="20" ry="24" stroke="#8a8a8a" strokeDasharray="3 2" strokeWidth="7" />
        <path d="M190 320H212M202 312V322M200 106H224M214 98V108" strokeWidth="5" />
        <path d="M0 350H14V552H0" stroke="#77777a" />
        <path d="M232 652H242V684H232Z" />
      </g>
      <g strokeWidth="3">
        {[172, 238, 304, 370].map((x) => <Car key={x} x={x} y={127} />)}
        {[115, 200].map((x) => <Car key={x} x={x} y={201} r={90} />)}
        {[115, 200].map((x) => <Car key={x} x={x} y={264} r={90} />)}
      </g>
      <g stroke="#b4595c" strokeWidth="3">
        <path d="M0 84H100V104H0M0 92H100M0 98H100M10 84V104M20 84V104M30 84V104M40 84V104M50 84V160M60 84V160M70 84V104M80 84V104M90 84V104M0 146H55M0 156H55" strokeDasharray="6 2" />
      </g>
      <path d="M62 168H128" stroke="#9a9a9a" strokeWidth="9" strokeDasharray="3 4" />
      <g stroke="#00e5ee" strokeWidth="4">
        <path d="M40 292V266Q20 268 16 290M254 294V268Q272 270 275 292M308 305H333Q330 328 308 326L318 340M180 348V326Q198 330 201 346Q204 330 222 326V348M54 350V374Q74 372 76 352M126 350Q130 374 150 376V352M232 385Q256 386 257 404H234M232 440Q254 438 257 418M268 497H243Q246 514 262 520L265 534M232 558Q254 560 257 580M257 590Q254 612 232 614M170 553H143Q146 574 170 578M170 622H143Q146 644 170 648M170 684H143Q146 710 170 714M232 762Q254 760 257 740H240" />
        <path d="M280 374h18v14h-18ZM412 464h13v18h-13ZM154 592h10v11h-10ZM146 763h14v10h-14ZM354 700h14v18h-14ZM310 680h12v12h-12ZM345 728h20" />
      </g>
      {bars([[0, 222, 30, 6], [132, 228, 51, 6], [252, 207, 51, 6], [318, 267, 21, 6], [444, 258, 63, 6], [174, 363, 24, 6], [174, 369, 12, 6], [246, 369, 21, 6], [252, 444, 36, 6], [261, 549, 18, 6], [75, 459, 72, 6], [84, 567, 51, 6], [81, 621, 57, 6], [63, 726, 84, 6], [258, 654, 27, 6], [207, 705, 21, 6], [453, 447, 111, 6], [393, 490, 12, 44], [246, 762, 39, 6], [246, 768, 18, 6], [98, 83, 7, 7]], "#ff0000")}
      {bars([[76, 231, 9, 9], [22, 394, 9, 9], [22, 425, 9, 9], [22, 452, 9, 9], [22, 479, 9, 9], [22, 505, 9, 9], [22, 530, 9, 9], [22, 560, 9, 9], [260, 382, 9, 9], [105, 575, 9, 9], [263, 633, 9, 9]], "#3f4f9a")}
      {bars([[151, 78, 8, 8], [276, 78, 8, 8], [404, 78, 8, 8], [49, 78, 8, 8], [619, 168, 8, 6], [519, 290, 8, 6], [619, 290, 8, 6], [544, 508, 8, 8], [404, 347, 8, 6], [619, 347, 8, 6], [151, 290, 8, 6]], GREEN)}
    </g>
  );
}

function SouthEast() {
  return (
    <g transform="translate(220 240) scale(0.33333)" fill="none">
      <g stroke={GREEN} strokeWidth="8">
        <path d="M50 58H172M170 0V105M50 136H172M170 136V142M170 170V265M50 215H172M50 293H172M170 322V375H50M50 378H145M143 405V440M50 424H145M50 470H172V585M80 528H170M50 628H172V685H190V780M50 722H190M222 685H292V780M232 38V115H298V0M232 8H298M232 175H298V385H232V375M232 175V200M232 226V265M232 240H298M232 293H298M300 368H380M232 440H298V520M232 460V520H706M300 277H706M232 520V540M232 618H400M340 520V618M420 618H470M434 520V618M495 618H602V520M465 685V780M495 685H602V780M372 0V68M598 0V70H580M423 190V222M340 190V210M340 232V275M325 783H340M415 783H432" />
      </g>
      <path d="M50 628H172M232 618H400M300 277H706M232 522H706" stroke="#2a7a2a" strokeWidth="1.500" />
      <path d="M709 62V90M709 142V168M709 208V234M709 298V325M709 370V405M709 425V450M709 475V500" stroke="#7fb0ff" strokeWidth="7" />
      <path d="M375 70H470M500 70H580V120M580 150V270M375 70V100H360M300 100H340M345 190H370M400 190H428V270M298 684H355M400 684H465" stroke="#6f9fe0" strokeWidth="5" />
      <g stroke="#9c9c9f" strokeWidth="6" strokeDasharray="5 1">
        <path d="M448 0V38M522 0V38M378 38H595M632 0V270M634 36H700M634 116H700M634 195H700M380 285V365M540 285V358H605L620 342L638 358H700M620 288V342M628 365V430L640 440H700M302 440H602L620 456L638 440M380 445V515M460 445V515M540 445V515M620 456V515M232 295V380M232 338H296" />
      </g>
      <g stroke={FURN} strokeWidth="3">
        {chairs([[325, 305, 0], [564, 305, 0], [680, 60, 90], [680, 138, 90], [680, 248, 90], [680, 305, 90], [680, 383, 90], [680, 493, 90], [326, 70, 90], [402, 250, 180], [322, 492, 180], [402, 492, 180], [515, 492, 180], [596, 492, 180]])}
        {desks([[312, 15], [312, 40], [692, 15], [692, 90], [692, 170], [692, 220], [600, 260], [622, 260], [370, 265], [355, 268], [310, 290], [600, 292], [640, 292], [690, 345], [690, 420], [690, 455], [355, 505], [430, 505], [470, 505], [560, 505], [650, 505], [68, 192], [108, 205], [150, 182], [155, 205], [68, 232], [108, 230], [150, 250], [65, 350], [85, 360], [110, 345], [155, 340], [155, 362], [350, 538], [372, 552], [525, 540], [566, 552], [590, 545], [240, 700], [275, 715], [475, 730], [530, 700], [520, 715], [574, 742], [490, 768], [590, 760]])}
        <path d="M378 40H590V66H378ZM458 190H548V212H458ZM470 214H482V228H470ZM498 214H510V228H498ZM526 214H538V228H526ZM462 260H542V272H462ZM415 350H503V372H415ZM426 335H438V348H426ZM454 335H466V348H454ZM482 335H494V348H482ZM412 284H490V295H412ZM300 370H368V384H300ZM320 370V384M344 370V384M56 62H165V76H56ZM82 62V76M110 62V76M138 62V76M78 42H130V54H78ZM104 42V54M55 296H102V310H55ZM78 180H98V210H78ZM134 172H166V196H134ZM76 220H98V248H76ZM134 220H166V246H134ZM134 332H166V352H134Z" />
        <path d="M95 534H145V556H95ZM78 632H132V654H78ZM54 654H74V704H54ZM54 608H88V620H54ZM88 706H124V720H88ZM234 528H250V575H234ZM322 528H338V575H322ZM288 602H336V616H288ZM345 592H365V614H345ZM440 535H460V585H440ZM410 560H428V585H410ZM418 725H440V775H418ZM248 766H286V778H248ZM314 686H348V702H314ZM608 526H700V538H608ZM296 742H310V775H296ZM160 698H184V714H160Z" />
        <path d="M642 625H674V672H642ZM642 682H674V732H642ZM622 625H637V640H622ZM622 655H637V670H622ZM680 625H694V640H680ZM680 655H694V670H680ZM622 684H637V720H622ZM680 684H694V720H680ZM650 595H667V610H650ZM650 736H667V750H650ZM622 702H637M680 702H694" />
        <rect x="242" y="300" width="44" height="34" rx="12" /><rect x="242" y="342" width="44" height="34" rx="12" /><rect x="252" y="306" width="24" height="22" rx="6" /><rect x="252" y="348" width="24" height="22" rx="6" />
        <path d="M364 658H390M376 650V660" strokeWidth="5" />
        <ellipse cx="95" cy="398" rx="18" ry="16" stroke="#8a8a8a" strokeDasharray="3 2" strokeWidth="7" />
        <ellipse cx="95" cy="446" rx="18" ry="16" stroke="#8a8a8a" strokeDasharray="3 2" strokeWidth="7" />
        <ellipse cx="318" cy="238" rx="14" ry="20" stroke="#8a8a8a" strokeDasharray="3 2" strokeWidth="7" />
      </g>
      <path d="M248 690V736H270M538 530V576H558M510 725H552V708M466 740H508V764H480M560 735V778" stroke="#000" strokeWidth="5" />
      <path d="M345 584H372" stroke="#7a3a3c" strokeWidth="4" />
      <g stroke="#00e5ee" strokeWidth="4">
        <path d="M238 42Q258 40 257 20H235M266 122H242Q246 142 262 148V165M234 205Q257 206 257 222H240M234 264Q254 266 258 284M170 107Q146 108 143 130H168M170 145H143Q146 168 170 170M170 264Q146 266 143 288M143 302Q146 324 170 326M470 70Q478 90 500 95V70M338 100Q346 124 368 124V100M578 120H554Q556 146 578 150M370 190V166Q392 168 398 188M266 397H240Q244 422 262 428L266 440M232 472Q256 470 258 448M178 522V544Q198 542 200 526Q204 542 224 544V522M232 588Q256 590 258 612M170 588Q146 590 143 610H170M143 640Q146 664 170 668M56 528V504Q78 506 80 528M56 724V750Q78 748 80 726M197 686V712Q220 710 222 690M404 620Q406 596 430 594V618M470 618V594Q492 596 494 620M570 627H548Q550 648 568 652Q550 656 548 674H570M356 684V706Q376 704 378 688Q382 704 400 706V684M470 686V712Q492 710 494 690M346 784V815Q374 812 377 790Q380 812 409 815V784M142 380Q120 382 118 402M142 466Q120 464 118 445" />
        <path d="M145 42h15v9h-15ZM56 142h16v8h-16ZM56 282h16v8h-16ZM238 70h8v14h-8ZM284 70h8v14h-8ZM284 250h10v16h-10ZM284 272h10v18h-10ZM276 180h12v14h-12ZM308 194h20v14h-20ZM322 258h10v12h-10ZM56 382h14v10h-14ZM56 454h14v10h-14ZM114 404h18v14h-18ZM114 426h18v14h-18ZM266 526h16v9h-16ZM492 282h18v12h-18ZM192 752h10v16h-10ZM298 180v6M150 535h8M150 716h8" />
      </g>
      <path d="M360 812L377 792L394 812Z" fill="#8a8a8a" />
      {bars([[63, 6, 84, 6], [93, 105, 33, 8], [93, 156, 42, 8], [90, 270, 42, 6], [96, 318, 30, 6], [174, 177, 24, 6], [174, 183, 12, 6], [72, 405, 30, 6], [69, 444, 36, 6], [96, 489, 54, 6], [81, 594, 54, 6], [87, 681, 51, 6], [126, 738, 51, 6], [222, 738, 45, 6], [246, 42, 40, 6], [246, 48, 18, 6], [276, 117, 21, 6], [249, 198, 45, 6], [246, 267, 36, 6], [246, 336, 36, 6], [246, 468, 36, 6], [426, 123, 90, 6], [408, 387, 108, 9], [252, 558, 66, 6], [369, 564, 36, 6], [468, 564, 57, 6], [438, 621, 27, 7], [438, 628, 12, 7], [627, 642, 48, 6], [294, 690, 6, 63], [453, 702, 9, 63], [504, 729, 54, 6]], "#ff0000")}
      {bars([[103, 90, 9, 9], [263, 64, 9, 9], [312, 240, 9, 9], [76, 400, 9, 9]], "#3f4f9a")}
      <g stroke="#e8e8e8" strokeWidth="4">
        <path d="M714 597V766M733 785H900M698 766H733V800H698ZM720 542L740 562L762 542M740 562V584M915 738L957 780M957 738L915 780" />
      </g>
    </g>
  );
}

function FloorPlan() {
  return (
    <svg aria-label="Floor plan" width="560" height="530" viewBox="0 0 560 530" className="absolute top-[88px] left-[710px]">
      <WestWing />
      <NorthEast />
      <SouthEast />
    </svg>
  );
}

/* ---------- canvas overlays ---------- */

function ViewCube() {
  return (
    <div className="absolute top-[45px] right-4 w-[126px] font-['Liberation_Sans'] text-[22px] leading-6 font-bold text-[#acaeb2]">
      <svg width="134" height="134" viewBox="0 0 134 134" className="absolute top-[5px] -left-1"><circle cx="67" cy="67" r="58" fill="none" stroke="#444952" strokeWidth="14" /></svg>
      <div className="relative flex h-36 flex-col items-center justify-between">
        <button>N</button>
        <div className="flex w-full items-center justify-between">
          <button className="-ml-2">W</button>
          <button className="grid size-[56px] place-items-center border border-[#8b8d91] bg-[#b3b5b9]">
            <span className="grid size-[34px] place-items-center bg-[#a3a6ad] font-['Open_Sans'] text-[12px] leading-4 font-bold text-[#50555c]">TOP</span>
          </button>
          <button className="-mr-1">E</button>
        </div>
        <button>S</button>
      </div>
      <button className="mx-auto mt-5 flex h-[21px] w-[57px] items-center justify-between rounded-md border border-[#b4b6ba] bg-[#94979f] px-1 text-[13px] leading-4 font-normal text-[#50555c]">
        WCS
        <svg width="11" height="7" viewBox="0 0 11 7"><path d="M1 1H10L5.500 6Z" fill="#b5b7bb" stroke="#777a80" /></svg>
      </button>
    </div>
  );
}

function NavBar() {
  return (
    <div className="absolute top-[261px] right-0 flex h-[259px] w-[34px] flex-col items-start overflow-hidden rounded-l-md border-l-2 border-[#1a1f26] bg-[#5a5f63] text-[#474b50]">
      <svg width="40" height="259" viewBox="0 0 40 259" fill="none" stroke="currentColor" strokeWidth="1.500" className="shrink-0">
        <circle cx="33" cy="6" r="4" /><circle cx="33" cy="252" r="4" />
        <circle cx="19" cy="35" r="14" /><circle cx="19" cy="35" r="8" /><path d="M19 21H32V34M13 42L25 28M16 60H22L19 63Z" />
        <path d="M2 68H38M2 203H38" stroke="#666b70" />
        <path d="M13 101L5 89Q8 85 12 90L10 79Q13 76 15 80L17 87L18 75Q21 73 22 77V87L25 76Q29 75 28 80L27 89L30 82Q34 83 32 89L28 101Z" />
        <path d="M6 110L24 127M24 110L6 127M6 110H10M6 110V114M24 110H20M24 110V114M6 127V123M6 127H10M17 147H23L20 150Z" />
        <circle cx="25" cy="129" r="6" strokeWidth="2" /><path d="M29 134L34 139" strokeWidth="3" />
        <path d="M16 183V166H12L19 157L26 166H22V183ZM5 172Q5 167 14 167M24 167Q36 168 35 173Q28 178 8 176M13 172L8 176L13 180M17 194H23L20 197Z" />
        <path d="M5 207H13V215H5ZM15 207H23V215H15ZM25 207H33V215H25ZM5 219H25V235H5Z" /><path d="M11 223V231L19 227Z" fill="currentColor" />
      </svg>
    </div>
  );
}

function Watermark() {
  return (
    <div className="pointer-events-none absolute bottom-[-17px] left-[831px] flex w-[232px] flex-col items-center gap-2 font-bold text-[#63686b]">
      <div lang="ar" dir="rtl" className="font-['DejaVu_Sans'] text-[64px] leading-[64px] whitespace-nowrap">مستقل</div>
      <div className="font-['Liberation_Sans'] text-[37px] leading-10">mostaql.com</div>
    </div>
  );
}

function CommandLine() {
  return (
    <div className="relative mr-[374px] mb-px ml-[381px] flex h-8 items-stretch">
      <div className="flex w-[70px] items-center justify-between rounded-l bg-[#2a313c] pr-1.5 pl-1">
        <div className="flex items-center gap-2">
          <svg width="6" height="22" viewBox="0 0 6 22"><path d="M1 0V22M5 0V22" stroke="#a9adb3" strokeWidth="2" strokeDasharray="2 2" /></svg>
          <button aria-label="Close command line"><svg width="12" height="12" viewBox="0 0 12 12"><path d="M1 1L11 11M11 1L1 11" stroke="#c6c8cb" strokeWidth="2" /></svg></button>
        </div>
        <button aria-label="Customize command line"><Ico><path d="M2 18L12 8" stroke="#d0d0d0" strokeWidth="3" strokeLinecap="round" /><path d="M15 1Q10 2 11 8Q14 12 19 8V5L16 7L13 6V3Z" fill="#d0d0d0" /></Ico></button>
      </div>
      <div className="flex flex-1 items-center rounded-r-sm bg-[#bfc0c2]/97 pl-1">
        <button aria-label="Recent commands" className="flex items-center gap-0.5">
          <svg width="20" height="16" viewBox="0 0 20 16"><path d="M.5.5H19.500V15.500H.5Z" fill="#b0b2b5" stroke="#6a6d72" /><path d="M0 0H20V5H0Z" fill="#6a6d72" /><path d="M2 7L5 9L2 11M7 12H11" stroke="#555" fill="none" /></svg>
          <Caret big color="#55585c" />
        </button>
        <input aria-label="Command" placeholder="Type a command" className="ml-2.5 min-w-0 flex-1 bg-transparent font-['DejaVu_Sans_Mono'] text-[14px] italic outline-none placeholder:text-[#5e6165]" />
        <button aria-label="Command history" className="px-1.5"><svg width="9" height="5" viewBox="0 0 9 5"><path d="M0 5H9L4.500 0Z" fill="#55585c" /></svg></button>
      </div>
    </div>
  );
}

function Canvas() {
  return (
    <main className="relative flex min-h-0 flex-1 flex-col border-b border-[#4a4d52] bg-[#212830]">
      <div className="absolute inset-0 overflow-hidden">
        <FloorPlan />
        <ViewCube />
        <NavBar />
        <div className="absolute top-[319px] right-0 left-[1191px] h-px bg-[#f0f0f0]" />
        <div className="absolute top-0 left-[1546px] h-[675px] w-px bg-[#f0f0f0]" />
        <div className="absolute top-[313px] left-[1540px] size-[13px] border border-[#f0f0f0]" />
      </div>
      <Watermark />
      <div className="relative flex items-start justify-between pt-1.5 pl-px text-[14px] leading-5 text-white">
        <div className="flex"><button>[−]</button><button>[Top]</button><button>[2D Wireframe]</button></div>
        <div className="flex items-center gap-2.5 pt-[5px] pr-0.5">
          <button aria-label="Minimize drawing"><svg width="14" height="14" viewBox="0 0 14 14"><path d="M0 8H14V12H0Z" fill="#f0f0f0" /></svg></button>
          <button aria-label="Restore drawing"><svg width="14" height="14" viewBox="0 0 14 14" fill="none" stroke="#f0f0f0" strokeWidth="2"><path d="M4 2H13V10M2 5H10V12H2Z" /></svg></button>
          <button aria-label="Close drawing window"><svg width="14" height="14" viewBox="0 0 14 14"><path d="M2 2L12 12M12 2L2 12" stroke="#f0f0f0" strokeWidth="3" /></svg></button>
        </div>
      </div>
      <div className="mt-auto"><CommandLine /></div>
    </main>
  );
}

/* ---------- status bar ---------- */

function Tool({ label, on, children }: Kids & { label: string; on?: boolean }) {
  return <button aria-label={label} className={on ? "grid w-[30px] place-items-center border-r border-[#222830] bg-[#5f90c1]" : "grid w-[30px] place-items-center"}>{children}</button>;
}
function Drop({ label }: { label: string }) {
  return <button aria-label={label} className="grid w-5 place-items-center"><Caret big /></button>;
}
function Set({ children }: Kids) {
  return <div className="flex bg-[#3b4453]">{children}</div>;
}
const Person = ({ c = W }: { c?: string }) => <path d="M8 1L10 1L12 12L17 19L12 18L9 14L6 18L1 19L6 12Z" fill={c} />;

function StatusBar() {
  return (
    <div className="ml-auto flex h-[30px] gap-[3px] text-[14px] leading-5 text-[#eceef0]">
      <Set><button className="w-[59px]">MODEL</button></Set>
      <Set>
        <Tool label="Grid"><Ico><path d="M0 5H20M0 10H20M0 15H20M5 0V20M10 0V20M15 0V20" stroke={W} strokeWidth="1.200" /></Ico></Tool>
        <Tool label="Snap"><Ico><path d="M4 3V20M10 3V20M16 3V20" stroke={W} strokeWidth="2.500" strokeDasharray="2.500 3" /></Ico></Tool>
        <Drop label="Snap settings" />
      </Set>
      <Set>
        <Tool label="Ortho" on><Ico s={24}><path d="M3 1V22H22M3 15H9V22" stroke="#fff" strokeWidth="1.500" /></Ico></Tool>
        <Tool label="Polar tracking"><Ico><circle cx="9" cy="11" r="7.500" stroke={W} /><path d="M9 11H20M9 11L17 2" stroke={W} /></Ico></Tool>
        <Drop label="Polar settings" />
        <Tool label="Isodraft"><Ico><path d="M9 0V20" stroke="#4fb36a" /><path d="M1 2L9 10" stroke={W} /><path d="M9 10L17 18" stroke="#d05a5a" strokeWidth="1.500" /></Ico></Tool>
        <Drop label="Isodraft settings" />
      </Set>
      <Set>
        <Tool label="Object snap tracking" on><Ico><path d="M16 2L1 17H20" stroke="#fff" strokeWidth="1.500" /><path d="M7 8H13V14" stroke="#fff" /></Ico></Tool>
        <Tool label="Object snap" on><Ico><path d="M4 4H18V19H4Z" stroke="#fff" strokeWidth="1.500" /><path d="M1 1H6V6H1Z" fill="#5f90c1" stroke="#fff" /></Ico></Tool>
        <Drop label="Object snap settings" />
      </Set>
      <Set>
        <Tool label="Annotation visibility" on><Ico><Person c="#fff" /><circle cx="16" cy="5" r="3.500" stroke="#fff" /></Ico></Tool>
        <Tool label="Auto scale"><Ico><Person /><path d="M17 0L12 6H15L13 11L19 4H16Z" fill={W} /></Ico></Tool>
        <Tool label="Annotation scale icon"><Ico><Person /></Ico></Tool>
        <button className="flex w-[42px] items-center justify-center gap-1.5">1:1<Caret big /></button>
      </Set>
      <Set>
        <Tool label="Workspace"><Ico><circle cx="10" cy="10" r="5" stroke={W} strokeWidth="4" /><path d="M10 0V4M10 16V20M0 10H4M16 10H20M3 3L6 6M14 14L17 17M17 3L14 6M6 14L3 17" stroke={W} strokeWidth="3" /></Ico></Tool>
        <Drop label="Workspace list" />
      </Set>
      <Set><Tool label="Annotation monitor"><Ico><path d="M10 0V20M0 10H20" stroke={W} strokeWidth="2.500" /></Ico></Tool></Set>
      <Set><Tool label="Isolate objects"><Ico><path d="M1 1H8V8H1Z" stroke={W} /><circle cx="15" cy="9" r="4" stroke={W} /><path d="M8 12L12 19H4Z" stroke={W} /></Ico></Tool></Set>
      <Set>
        <div className="flex w-[68px] justify-around">
          <Tool label="Hardware acceleration"><Ico s={24}><path d="M4 2L12 0L21 5V17L12 22L4 18Z" fill="#2f6fb3" /><path d="M1 13H9V22H1Z" fill="#f5a63a" /><path d="M8 1V10M3 5H13" stroke="#bfe0ff" strokeWidth="2" /><path d="M10 18L14 22L23 12" stroke="#4fa84f" strokeWidth="4" /></Ico></Tool>
          <Tool label="Graphics performance"><Ico><path d="M0 1H19V17H0Z" fill={W} /><path d="M0 14L6 3L13 17" stroke="#3b4453" strokeWidth="1.500" /><path d="M14 9L20 20H9Z" fill="#f0b070" /></Ico></Tool>
        </div>
      </Set>
      <div className="flex w-12 overflow-hidden bg-[#3b4453]">
        <Tool label="Clean screen"><Ico><path d="M1 2H19V18H1Z" stroke={W} strokeWidth="1.500" /><path d="M11 9L15 5M9 11L5 15M12 5H15V8M5 12V15H8" stroke={W} /></Ico></Tool>
        <button aria-label="Customization" className="ml-0.5 shrink-0"><Ico><path d="M0 3H20M0 10H20M0 17H20" stroke={W} strokeWidth="2" /></Ico></button>
      </div>
    </div>
  );
}

function Footer() {
  return (
    <footer className="relative flex h-[34px] shrink-0 items-start">
      <div className="flex h-[22px] items-stretch pl-3 text-[14px] leading-5">
        <button className="w-[72px] rounded-b-lg bg-[#3b4453] text-[15px] font-bold text-white">Model</button>
        <button className="w-[104px] rounded-b-lg bg-[#2c3440] text-[#c3c5c9]">AR_PLA100</button>
        <button aria-label="New layout" className="mt-0.5 ml-[5px] grid w-[27px] place-items-center rounded-tl-xl rounded-br-xl bg-[#303744]">
          <svg width="10" height="10" viewBox="0 0 10 10"><path d="M5 0V10M0 5H10" stroke="#a8abb0" strokeWidth="2" /></svg>
        </button>
      </div>
      <div className="ml-auto pt-px"><StatusBar /></div>
    </footer>
  );
}

export default function App() {
  return (
    <div className="flex h-screen flex-col overflow-hidden bg-[#222830] font-['Open_Sans','Noto_Sans',sans-serif]">
      <Header />
      <Ribbon />
      <DocTabs />
      <Canvas />
      <Footer />
    </div>
  );
}
